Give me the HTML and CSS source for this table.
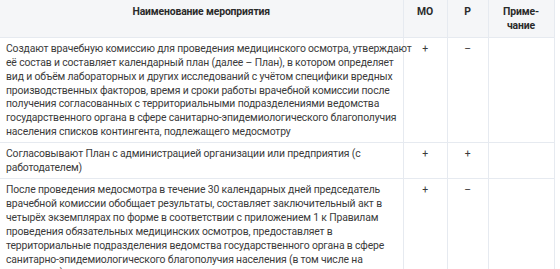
FILE: index.html
```html
<!DOCTYPE html>
<html lang="ru">
<head>
<meta charset="utf-8">
<link rel="stylesheet" href="styles.css">
</head>
<body>
<table class="plan">
  <colgroup>
    <col class="c-name"><col class="c-mo"><col class="c-r"><col class="c-note">
  </colgroup>
  <thead>
    <tr>
      <th>Наименование мероприятия</th>
      <th>МО</th>
      <th>Р</th>
      <th>Приме-<br>чание</th>
    </tr>
  </thead>
  <tbody>
    <tr>
      <td class="text">Создают врачебную комиссию для проведения медицинского осмотра, утверждают<br>её состав и составляет календарный план (далее – План), в котором определяет<br>вид и объём лабораторных и других исследований с учётом специфики вредных<br>производственных факторов, время и сроки работы врачебной комиссии после<br>получения согласованных с территориальными подразделениями ведомства<br>государственного органа в сфере санитарно-эпидемиологического благополучия<br>населения списков контингента, подлежащего медосмотру</td>
      <td class="mark">+</td>
      <td class="mark">–</td>
      <td></td>
    </tr>
    <tr>
      <td class="text">Согласовывают План с администрацией организации или предприятия (с<br>работодателем)</td>
      <td class="mark">+</td>
      <td class="mark">+</td>
      <td></td>
    </tr>
    <tr>
      <td class="text">После проведения медосмотра в течение 30 календарных дней председатель<br>врачебной комиссии обобщает результаты, составляет заключительный акт в<br>четырёх экземплярах по форме в соответствии с приложением 1 к Правилам<br>проведения обязательных медицинских осмотров, предоставляет в<br>территориальные подразделения ведомства государственного органа в сфере<br>санитарно-эпидемиологического благополучия населения (в том числе на<br>транспорте)</td>
      <td class="mark">+</td>
      <td class="mark">–</td>
      <td></td>
    </tr>
  </tbody>
</table>
</body>
</html>
```

FILE: styles.css
```css
html, body {
  margin: 0;
  padding: 0;
  background: #ffffff;
}
body {
  font-family: "Roboto", "Lato", sans-serif;
  font-size: 10.4px;
  letter-spacing: -0.15px;
  line-height: 13.9px;
  color: #3b3b3b;
}
.plan {
  border-collapse: collapse;
  width: 554px;
  table-layout: fixed;
}
.c-name { width: 403px; }
.c-mo { width: 44px; }
.c-r { width: 41px; }
.c-note { width: 66px; }
.plan th {
  background: #f5f6f8;
  font-weight: bold;
  color: #2b2b2b;
  text-align: center;
  vertical-align: top;
  padding: 5px 6px 4px;
  border: 1px solid #e6eaf0;
  border-top: none;
}
.plan td {
  vertical-align: top;
  padding: 4px 3px 3px 6px;
  border: 1px solid #e6eaf0;
}
.plan td.text {
  white-space: nowrap;
}
.plan tr > :first-child { border-left: none; }
.plan td.mark {
  text-align: center;
  padding-left: 3px;
}
```
